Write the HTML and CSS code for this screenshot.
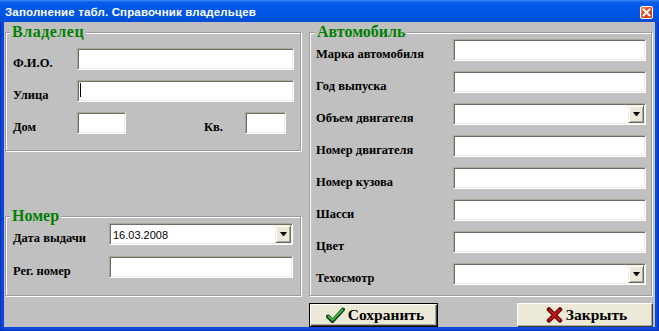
FILE: index.html
```html
<!DOCTYPE html>
<html lang="ru">
<head>
<meta charset="utf-8">
<title>Заполнение табл. Справочник владельцев</title>
<link rel="stylesheet" href="styles.css">
</head>
<body>
<div class="window">
  <div class="titlebar">
    <span class="title">Заполнение табл. Справочник владельцев</span>
    <span class="close-btn"><svg width="9" height="9" viewBox="0 0 9 9"><path d="M1.5 1.5 L7.5 7.5 M7.5 1.5 L1.5 7.5" stroke="#fff" stroke-width="1.8" stroke-linecap="square"/></svg></span>
  </div>
  <div class="frame">
    <div class="client">
      <div class="left-col">
        <fieldset class="group owner">
          <legend>Владелец</legend>
          <div class="form owner-form">
            <span class="lbl">Ф.И.О.</span><div class="field"></div>
            <span class="lbl">Улица</span><div class="field"><span class="caret"></span></div>
            <span class="lbl">Дом</span>
            <div class="house-row">
              <div class="field house"></div>
              <span class="lbl kv">Кв.</span>
              <div class="field flat"></div>
            </div>
          </div>
        </fieldset>
        <fieldset class="group number">
          <legend>Номер</legend>
          <div class="form number-form">
            <span class="lbl">Дата выдачи</span>
            <div class="field combo"><span class="value">16.03.2008</span><span class="drop"></span></div>
            <span class="lbl">Рег. номер</span><div class="field"></div>
          </div>
        </fieldset>
      </div>
      <fieldset class="group car">
        <legend>Автомобиль</legend>
        <div class="form car-form">
          <span class="lbl">Марка автомобиля</span><div class="field"></div>
          <span class="lbl">Год выпуска</span><div class="field"></div>
          <span class="lbl">Объем двигателя</span><div class="field combo"><span class="value"></span><span class="drop"></span></div>
          <span class="lbl">Номер двигателя</span><div class="field"></div>
          <span class="lbl">Номер кузова</span><div class="field"></div>
          <span class="lbl">Шасси</span><div class="field"></div>
          <span class="lbl">Цвет</span><div class="field"></div>
          <span class="lbl">Техосмотр</span><div class="field combo"><span class="value"></span><span class="drop"></span></div>
        </div>
      </fieldset>
      <div class="buttons">
        <button class="btn btn-default" type="button"><svg class="ico" width="19" height="17" viewBox="0 0 19 17"><path d="M2 9.5 L6.5 14 L17 2.5" fill="none" stroke="#0b3b12" stroke-width="4" stroke-linejoin="round" stroke-linecap="round"/><path d="M2.5 9.5 L6.5 13 L16.5 2.8" fill="none" stroke="#3fb43f" stroke-width="2" stroke-linejoin="round" stroke-linecap="round"/></svg><span>Сохранить</span></button>
        <button class="btn" type="button"><svg class="ico" width="17" height="16" viewBox="0 0 17 16"><path d="M3 2.5 L14 13.5 M14 2.5 L3 13.5" fill="none" stroke="#6a0000" stroke-width="4.5" stroke-linecap="round"/><path d="M3.5 3 L13.5 13 M13.5 3 L3.5 13" fill="none" stroke="#c01818" stroke-width="2" stroke-linecap="round"/></svg><span>Закрыть</span></button>
      </div>
    </div>
  </div>
</div>
</body>
</html>
```

FILE: styles.css
```css
html, body {
  margin: 0;
  padding: 0;
  background: #fff;
}

.window {
  width: 659px;
  height: 331px;
  display: flex;
  flex-direction: column;
  overflow: hidden;
}

.titlebar {
  height: 22px;
  flex: none;
  display: flex;
  align-items: center;
  justify-content: space-between;
  padding: 0 6px 0 5px;
  box-sizing: border-box;
  background: linear-gradient(#3d8cf5 0, #0a5ee8 2px, #0058e8 6px, #0055e3 14px, #0050da 19px, #0a4ad4 22px);
}

.title {
  color: #fff;
  font-family: "Liberation Sans", Arial, sans-serif;
  font-weight: bold;
  font-size: 11.5px;
  padding-top: 1px;
  letter-spacing: 0.15px;
}

.close-btn {
  width: 13px;
  height: 13px;
  box-sizing: border-box;
  border: 1px solid #fff;
  border-radius: 2px;
  background: linear-gradient(135deg, #f08a60, #e0502a 45%, #c63a12);
  display: flex;
  align-items: center;
  justify-content: center;
  margin-top: 2px;
}

.frame {
  flex: 1;
  padding: 0 4px 4px;
  background: #0b47db;
  box-shadow: inset 1px 0 #0832b8, inset -1px 0 #0832b8, inset 0 -1px #0832b8;
  display: flex;
}

.client {
  flex: 1;
  background: #c0c0c0;
  display: grid;
  grid-template-columns: 296px 343px;
  grid-template-rows: 271px 24px;
  column-gap: 8px;
  row-gap: 7px;
  padding: 3px 0 0 1px;
  font-family: "Liberation Serif", "Times New Roman", serif;
}

.left-col {
  display: flex;
  flex-direction: column;
  justify-content: space-between;
}

.group {
  margin: 0;
  box-sizing: border-box;
  border: 1px solid #9c9c9c;
  box-shadow: inset 1px 1px #fff, 1px 1px #fff;
  min-width: 0;
}

.group legend {
  font-family: "Liberation Serif", "Times New Roman", serif;
  font-weight: bold;
  font-size: 16px;
  line-height: 14px;
  color: #008000;
  background: #c0c0c0;
  padding: 0 2px;
}

.owner {
  height: 126px;
  padding: 9px 6px 0 7px;
}
.owner legend { margin-left: -3px; letter-spacing: 0.5px; }

.number {
  height: 87px;
  padding: 0 6px 0 7px;
}
.number legend { margin-left: -3px; }

.car {
  height: 271px;
  padding: 0 5px 0 6px;
}
.car legend { margin-left: -1px; }

.form {
  display: grid;
  grid-auto-rows: 22px;
}

.owner-form {
  grid-template-columns: 64px 217px;
  row-gap: 10px;
}

.number-form {
  grid-template-columns: 96px 184px;
  row-gap: 11px;
}

.car-form {
  grid-template-columns: 137px 193px;
  row-gap: 10px;
}

.lbl {
  font-weight: bold;
  font-size: 12.5px;
  line-height: 22px;
  padding-top: 4px;
  white-space: nowrap;
  color: #000;
}

.house-row {
  display: flex;
  align-items: flex-start;
}

.kv {
  margin-left: 78px;
  width: 41px;
}

.field {
  box-sizing: border-box;
  height: 22px;
  background: #fff;
  border: 1px solid;
  border-color: #aca899 #fff #fff #aca899;
  box-shadow: inset 1px 1px #716f64, inset -1px -1px #f1efe2;
}

.house { width: 49px; }
.flat { width: 41px; }

.caret {
  display: block;
  width: 1px;
  height: 14px;
  margin: 2px 0 0 2px;
  background: #000;
}

.combo {
  display: flex;
  justify-content: space-between;
  padding: 1px;
}

.combo .value {
  font-family: "Liberation Sans", Arial, sans-serif;
  font-size: 11px;
  align-self: center;
  padding-left: 2px;
  padding-top: 1px;
  color: #000;
}

.drop {
  width: 16px;
  box-sizing: border-box;
  background: #ece9d8;
  border: 1px solid;
  border-color: #f1efe2 #716f64 #716f64 #f1efe2;
  box-shadow: inset 1px 1px #fff, inset -1px -1px #aca899;
  display: flex;
  align-items: center;
  justify-content: center;
}

.drop::after {
  content: "";
  width: 1px;
  height: 0;
  border-top: 4px solid #000;
  border-left: 3px solid transparent;
  border-right: 3px solid transparent;
}

.buttons {
  grid-column: 2;
  display: flex;
  justify-content: space-between;
  margin-right: -1px;
}

.btn {
  box-sizing: border-box;
  height: 24px;
  margin: 0;
  padding: 0 0 0 3px;
  display: flex;
  align-items: center;
  justify-content: center;
  gap: 3px;
  background: #ece9d8;
  border: 1px solid;
  border-color: #fff #404040 #404040 #fff;
  box-shadow: inset -1px -1px #aca899;
  font-family: "Liberation Serif", "Times New Roman", serif;
  font-weight: bold;
  font-size: 15.5px;
  color: #000;
  width: 136px;
}

.btn-default {
  width: 129px;
  border-color: #000;
  box-shadow: inset 1px 1px #fff, inset -1px -1px #404040, inset -2px -2px #aca899;
}

.ico {
  display: block;
  flex: none;
}
```
